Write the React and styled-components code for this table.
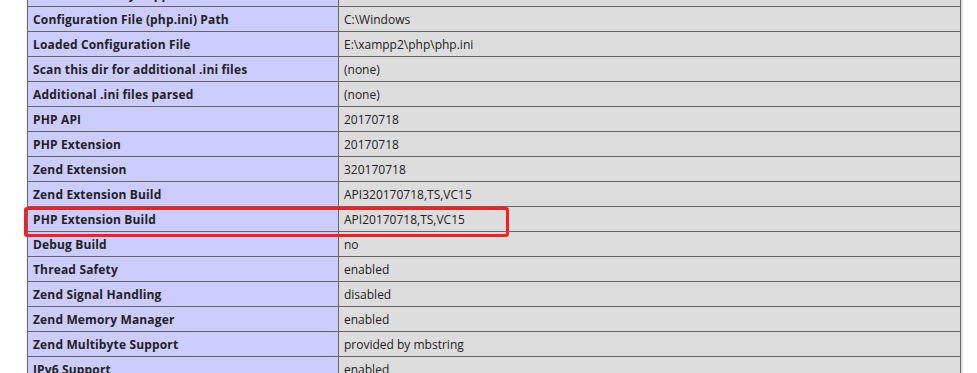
import React from "react";
import styled, { createGlobalStyle } from "styled-components";

const GlobalStyle = createGlobalStyle`
  html, body {
    margin: 0;
    padding: 0;
    background: #fff;
    overflow: hidden;
  }
  body {
    color: #222;
    font-family: "Open Sans", "Noto Sans", sans-serif;
  }
`;

const Page = styled.div`
  padding-left: 27px;
  margin-top: -19px;
`;

const InfoTable = styled.table`
  border-collapse: collapse;
  width: 934px;
  table-layout: fixed;
  box-shadow: 1px 2px 3px #ccc;
`;

const Cell = styled.td`
  border: 1px solid #666;
  height: 25px;
  box-sizing: border-box;
  padding: 1px 5px 0;
  font-size: 12px;
  vertical-align: middle;
  white-space: nowrap;
  color: #222;
  background: ${(p) => (p.$key ? "#ccccff" : "#dddddd")};
  font-weight: ${(p) => (p.$key ? 700 : 400)};
  letter-spacing: ${(p) => (p.$key ? "0.15px" : "0")};
  width: ${(p) => (p.$key ? "311px" : "auto")};
`;

// red marker drawn around the highlighted row
const Mark = styled.div`
  position: absolute;
  z-index: 2;
  left: 24px;
  top: 207px;
  width: 485px;
  height: 30px;
  box-sizing: border-box;
  border: 3px solid #ff1c1c;
  border-radius: 3px;
  pointer-events: none;
`;

const rows = [
  ["Virtual Directory Support", "enabled"],
  ["Configuration File (php.ini) Path", "C:\\Windows"],
  ["Loaded Configuration File", "E:\\xampp2\\php\\php.ini"],
  ["Scan this dir for additional .ini files", "(none)"],
  ["Additional .ini files parsed", "(none)"],
  ["PHP API", "20170718"],
  ["PHP Extension", "20170718"],
  ["Zend Extension", "320170718"],
  ["Zend Extension Build", "API320170718,TS,VC15"],
  ["PHP Extension Build", "API20170718,TS,VC15"],
  ["Debug Build", "no"],
  ["Thread Safety", "enabled"],
  ["Zend Signal Handling", "disabled"],
  ["Zend Memory Manager", "enabled"],
  ["Zend Multibyte Support", "provided by mbstring"],
  ["IPv6 Support", "enabled"],
];

export default function App() {
  return (
    <>
      <GlobalStyle />
      <Page>
        <InfoTable>
          <tbody>
            {rows.map(([k, v]) => (
              <tr key={k}>
                <Cell $key>{k}</Cell>
                <Cell>{v}</Cell>
              </tr>
            ))}
          </tbody>
        </InfoTable>
      </Page>
      <Mark />
    </>
  );
}
